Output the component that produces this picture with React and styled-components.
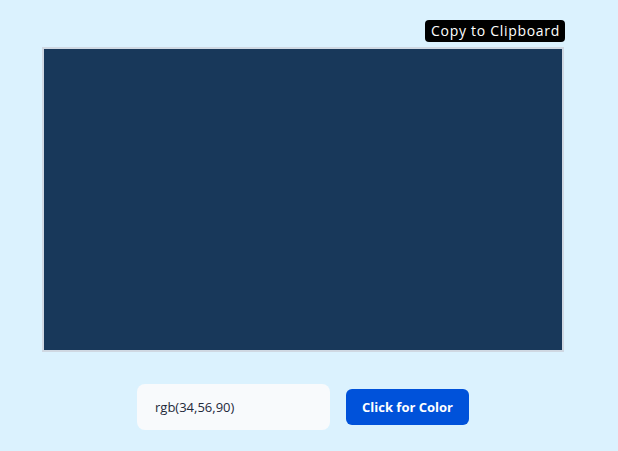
import React, { useState } from 'react';
import styled, { createGlobalStyle } from 'styled-components';

const GlobalStyle = createGlobalStyle`
  html, body {
    margin: 0;
    padding: 0;
    background: #dbf2fe;
    font-family: "Open Sans", "Noto Sans", sans-serif;
  }
`;

const Page = styled.div`
  width: 522px;
  margin-left: 42px;
  padding-top: 20px;
  display: flex;
  flex-direction: column;
`;

const CopyButton = styled.button`
  align-self: flex-end;
  margin-right: -1px;
  height: 22px;
  padding: 0 5px 0 6px;
  border: none;
  border-radius: 4px;
  background: #000;
  color: #fff;
  font-family: "Open Sans", sans-serif;
  font-size: 14px;
  letter-spacing: 0.7px;
  line-height: 22px;
  cursor: pointer;
`;

const Swatch = styled.div`
  margin-top: 5px;
  height: 301px;
  border: 2px solid #cfd8e2;
  background: ${p => p.color};
`;

const Controls = styled.div`
  margin-top: 32px;
  display: flex;
  align-items: center;
  justify-content: center;
  gap: 16px;
`;

const ColorInput = styled.input`
  box-sizing: border-box;
  width: 193px;
  height: 46px;
  padding: 0 18px;
  border: none;
  border-radius: 8px;
  background: #f8fafc;
  color: #1e293b;
  font-family: "Open Sans", sans-serif;
  font-size: 13px;
  outline: none;
`;

const ColorButton = styled.button`
  height: 36px;
  padding: 0 16px;
  border: none;
  border-radius: 6px;
  background: #0052da;
  color: #fff;
  font-family: "Open Sans", sans-serif;
  font-weight: 700;
  font-size: 13px;
  cursor: pointer;
`;

export default function App() {
  const [color, setColor] = useState('rgb(34,56,90)');

  const randomize = () => {
    const c = () => Math.floor(Math.random() * 256);
    setColor(`rgb(${c()},${c()},${c()})`);
  };

  return (
    <>
      <GlobalStyle />
      <Page>
        <CopyButton onClick={() => navigator.clipboard && navigator.clipboard.writeText(color)}>
          Copy to Clipboard
        </CopyButton>
        <Swatch color="#18385a" />
        <Controls>
          <ColorInput value={color} readOnly />
          <ColorButton onClick={randomize}>Click for Color</ColorButton>
        </Controls>
      </Page>
    </>
  );
}
